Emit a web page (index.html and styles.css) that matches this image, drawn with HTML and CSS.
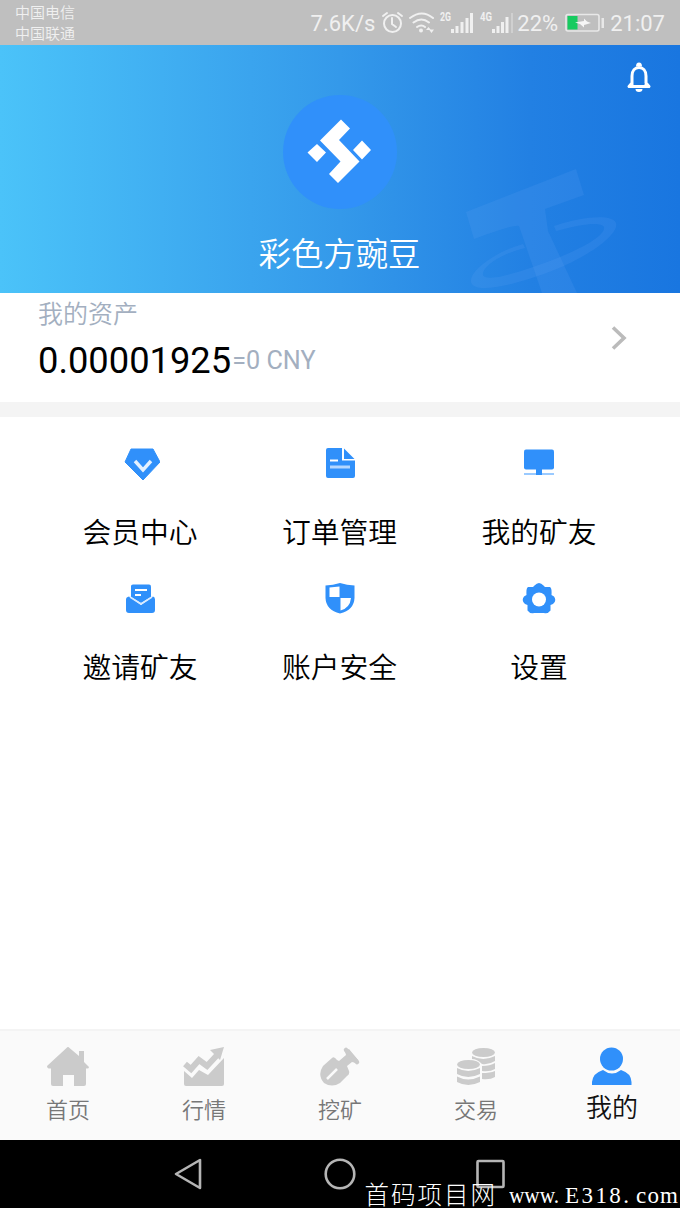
FILE: index.html
```html
<!DOCTYPE html>
<html lang="zh-CN">
<head>
  <meta charset="UTF-8" />
  <meta name="viewport" content="width=device-width, initial-scale=1.0"/>
  <title>我的</title>
  <link rel="stylesheet" href="styles.css">
</head>
<body>

  <div class="status-bar">
    <div class="carriers">
      <span>中国电信</span>
      <span>中国联通</span>
    </div>
    <div class="status-right">
      <span class="speed">7.6K/s</span>
      <svg class="status-icons" width="134" height="30" viewBox="380 8 134 30">
        <g fill="none" stroke="#f0f0f0" stroke-width="2" stroke-linecap="round">
          <circle cx="392.500" cy="23.500" r="8.500"/>
          <path d="M392 18v6l4 3M383 16l4-3M398 13l4 3"/>
          <path d="M410 18q12-9 23 0M413.500 22.500q8-6 15.500 0M417 27q4.500-3 8 0"/>
        </g>
        <circle cx="421" cy="30.500" r="2" fill="#f0f0f0"/>
        <path d="M426 30l2.500-3 2.500 3zM429 29.500h5l-2.500 3.500z" fill="#f0f0f0"/>
        <text class="net" x="440" y="21" textLength="11" lengthAdjust="spacingAndGlyphs">2G</text>
        <path d="M451 29h3v4h-3zM455.500 26h3v7h-3zM460.500 22h3v11h-3zM465.500 18h3v15h-3zM470 13h3v20h-3z" fill="#f0f0f0"/>
        <text class="net" x="480" y="21" textLength="12" lengthAdjust="spacingAndGlyphs">4G</text>
        <path d="M492 29h3v4h-3zM496.500 26h3v7h-3zM501 22h3v11h-3zM505.500 17h3v16h-3z" fill="#f0f0f0"/>
        <path d="M511 13h2v20h-2z" fill="#d0d0d0"/>
      </svg>
      <span class="percent">22%</span>
      <svg class="battery" width="40" height="20" viewBox="0 0 40 20">
        <rect x="1" y="1.500" width="33" height="16.500" rx="2" fill="none" stroke="#e8e8e8" stroke-width="1.600"/>
        <rect x="2.500" y="3" width="10" height="13.500" fill="#17cb60"/>
        <rect x="36.500" y="5" width="2.500" height="10" fill="#e8e8e8"/>
        <path d="M10 9.500L19 8V5.500L22 8.500L26 10L19 12V14.500L15 11Z" fill="#f6f6f6"/>
      </svg>
      <span class="time">21:07</span>
    </div>
  </div>

  <header class="profile">
    <svg class="coin-bg" width="160" height="125" viewBox="460 168 160 125">
      <path d="M466 212L576 169L584 195L545 209L548 231L577 293H542L519 226Q514 224 474 239Z"/>
      <path fill-rule="evenodd" d="M523 244C492 253 469 272 471 282C474 294 510 287 554 270C594 254 619 233 616 223C613 214 583 216 554 226L556 231C584 223 602 222 604 227C606 235 584 248 550 261C512 275 485 282 483 275C481 268 499 254 525 248Z"/>
    </svg>
    <div class="top-row">
      <svg class="bell" width="26" height="32" viewBox="0 0 26 32">
        <path d="M4 25.500H22M6 25V15C6 9.500 9 6.500 13 6.500S20 9.500 20 15V25M3 25.500L6 22M23 25.500L20 22" fill="none" stroke="#fff" stroke-width="3" stroke-linecap="round"/>
        <path d="M10 5.500a3 4 0 0 1 6 0zM9.500 28h7a3.500 3 0 0 1-7 0z" fill="#fff"/>
      </svg>
    </div>
    <svg class="avatar" width="114" height="114" viewBox="0 0 114 114">
      <circle cx="57" cy="57" r="57" fill="#3090fa"/>
      <path d="M58 24.500L67 33.500L56 45L76.500 66.500L55 88L46 79L57.500 66.500L37 45.500Z" fill="#fff"/>
      <path d="M34 49L43 57.500L34 67L24.500 57.500ZM79 45.500L88 55L79 64.500L70 55Z" fill="#fff"/>
    </svg>
    <h1>彩色方豌豆</h1>
  </header>

  <section class="assets">
    <div>
      <div class="assets-label">我的资产</div>
      <div class="assets-value"><b>0.00001925</b><span>=0 CNY</span></div>
    </div>
    <svg class="arrow" width="18" height="26" viewBox="0 0 18 26">
      <path d="M3 2.500L14 13L3 23.500" fill="none" stroke="#bbb" stroke-width="3.600"/>
    </svg>
  </section>

  <main class="menu">
    <a class="menu-item">
      <svg width="40" height="36" viewBox="0 0 40 36">
        <path d="M11 2H33L40 15L23 33L5 15Z" fill="#3090fa" stroke="#3090fa" stroke-linejoin="round"/>
        <path d="M15 14L23 23L31 14" fill="none" stroke="#e4f1ff" stroke-width="3.400"/>
      </svg>
      <span>会员中心</span>
    </a>
    <a class="menu-item">
      <svg width="40" height="36" viewBox="0 0 40 36">
        <path d="M8 1H22V13.500H35V29Q35 31 33 31H8Q6 31 6 29V3Q6 1 8 1Z" fill="#3090fa"/>
        <path d="M24 1.500L34.500 12H24Z" fill="#3090fa"/>
        <path d="M10 13.500H18" stroke="#fff" stroke-width="2"/>
        <path d="M10 20H30" stroke="#b4d7ff" stroke-width="3"/>
      </svg>
      <span>订单管理</span>
    </a>
    <a class="menu-item">
      <svg width="40" height="36" viewBox="0 0 40 36">
        <rect x="5" y="2.500" width="30" height="20" rx="2" fill="#3090fa"/>
        <path d="M5 27H35" stroke="#9acaff" stroke-width="2"/>
        <path d="M17 22H23V28H17Z" fill="#3090fa"/>
      </svg>
      <span>我的矿友</span>
    </a>
    <a class="menu-item">
      <svg width="40" height="36" viewBox="0 0 40 36">
        <path d="M11 4Q11 2.500 13 2.500H29Q31 2.500 31 4.500V15L21 21L11 15Z" fill="#3090fa"/>
        <path d="M15 8H27M15 13H21" stroke="#fff" stroke-width="2"/>
        <path d="M9 14.500L21 23L33 14.500Q35 15 35 17.500V28Q35 31 32 31H9Q6 31 6 28V17.500Q6 15 9 14.500Z" fill="#3090fa"/>
        <path d="M10 15L21 22L32 15" fill="none" stroke="#d9eaff" stroke-width="1.500"/>
      </svg>
      <span>邀请矿友</span>
    </a>
    <a class="menu-item">
      <svg width="40" height="36" viewBox="0 0 40 36">
        <path d="M20 1Q27 3 34.500 3.500V16Q34 28 20 31.500Q6 28 5.500 16V3.500Q13 3 20 1Z" fill="#3090fa"/>
        <path d="M9.500 5.500L19.500 4.500V15H9.500ZM20.500 16H31Q30 26 20.500 28.500Z" fill="#fff"/>
      </svg>
      <span>账户安全</span>
    </a>
    <a class="menu-item">
      <svg width="40" height="36" viewBox="0 0 40 36">
        <path d="M15.500 3.500Q20-1.500 24.500 3.500L26 5H31Q33 6 32.500 13L35 14.500Q38 19 34 22L31.500 23V28.500Q29 32 25 31L20 31L15 31Q11 32 8.500 28.500V23L6 22Q2 19 5 14.500L7.500 13Q7 6 9 5H14Z" fill="#3090fa"/>
        <circle cx="20" cy="17.500" r="7" fill="#fff"/>
      </svg>
      <span>设置</span>
    </a>
  </main>

  <nav class="tab-bar">
    <a class="tab">
      <svg width="44" height="42" viewBox="0 0 44 42">
        <path d="M20.500 2Q22 0 23.500 2L33 10V5H38V16L43 21Q43 23 40 22.500V38Q40 40 38 40H28V29H17V40H7Q5 40 5 38V22.500Q1 23 1 20Z"/>
      </svg>
      <span>首页</span>
    </a>
    <a class="tab">
      <svg width="44" height="42" viewBox="0 0 44 42">
        <path d="M2 25L10 32L17 24L26 29L42 12V38Q42 40 40 40H4Q2 40 2 38Z"/>
        <path d="M3 18L9 23L17 14L25 20L37 7" fill="none" stroke="#cbcbcb" stroke-width="6"/>
        <path d="M28 4L42 1L38 14Z"/>
      </svg>
      <span>行情</span>
    </a>
    <a class="tab">
      <svg width="44" height="42" viewBox="0 0 44 42">
        <path d="M14 12Q16 10 19 14L21 15L28 9L27 5L31 3L40 14L38 17L34 16L29 20L31 25Q32 28 29 30L22 37Q14 42 6 37Q-1 29 5 20Z"/>
        <path d="M28 4L39 16" stroke="#cbcbcb" stroke-width="4.500" stroke-linecap="round"/>
        <path d="M9 33L19 23" stroke="#fafafa" stroke-width="2.500"/>
      </svg>
      <span>挖矿</span>
    </a>
    <a class="tab">
      <svg width="44" height="42" viewBox="0 0 44 42">
        <ellipse cx="29.500" cy="6.500" rx="11.500" ry="4.500"/>
        <path d="M18 10Q29 16 41 10V15Q35 19 28 18Q23 13 18 13ZM28 20Q36 20 41 17V23Q36 26 28 25ZM28 27Q36 27 41 25V31Q36 34 28 33Z"/>
        <ellipse cx="14.500" cy="18.500" rx="11.500" ry="4.500"/>
        <path d="M3 22Q14 28 26 22V28Q14 34 3 28ZM3 30.500Q14 36.500 26 30.500V36Q14 42 3 36Z"/>
      </svg>
      <span>交易</span>
    </a>
    <a class="tab active">
      <svg width="44" height="42" viewBox="0 0 44 42">
        <circle cx="21.500" cy="13" r="11.500"/>
        <path d="M13 24Q22 31 31 24Q41 27 41.500 36V39H2V36Q3 27 13 24Z"/>
      </svg>
      <span>我的</span>
    </a>
  </nav>

  <footer class="system-nav">
    <svg width="30" height="34" viewBox="0 0 30 34"><path d="M2 17L26 3V31Z"/></svg>
    <svg width="34" height="34" viewBox="0 0 34 34"><circle cx="17" cy="17" r="14.300"/></svg>
    <svg width="30" height="34" viewBox="0 0 30 34"><rect x="1.500" y="4" width="26" height="26" rx="1"/></svg>
    <div class="site-mark">
      <span>首码项目网</span>
      <svg class="site-url" width="170" height="30" viewBox="0 0 170 30">
        <text x="0" y="24.500" textLength="50" lengthAdjust="spacingAndGlyphs">www.</text>
        <text x="56" y="24.500" textLength="64">E318.</text>
        <text x="127" y="24.500" textLength="42">com</text>
      </svg>
    </div>
  </footer>

</body>
</html>
```
FILE: styles.css
```css
* {
  box-sizing: border-box;
}
body {
  margin: 0;
  height: 1208px;
  display: flex;
  flex-direction: column;
  overflow: hidden;
  background: #fff;
  color: #111;
  font-family: Roboto, "Noto Sans CJK SC", sans-serif;
}
svg {
  display: block;
  flex-shrink: 0;
}

/* status bar */
.status-bar {
  height: 45px;
  display: flex;
  justify-content: space-between;
  padding: 0 15px;
  background: #bfbfbf;
  color: #f0f0f0;
}
.carriers {
  display: flex;
  flex-direction: column;
  padding-top: 3px;
  font-size: 15px;
  font-weight: 350;
  line-height: 20.5px;
}
.status-right {
  display: flex;
  align-items: center;
  height: 46px;
  font-size: 22px;
}
.speed {
  margin-right: 5px;
}
.status-icons {
  margin-right: 3px;
}
.net {
  font: bold 12px Roboto, sans-serif;
  fill: #f0f0f0;
}
.percent {
  margin-right: 7px;
}
.battery {
  margin-right: 5px;
}

/* profile header */
.profile {
  position: relative;
  height: 248px;
  display: flex;
  flex-direction: column;
  align-items: center;
  background: linear-gradient(to right, #4bc3f9 0%, #3499ea 50%, #2280e3 78%, #1976e0 100%);
  color: #fff;
}
.coin-bg {
  position: absolute;
  left: 460px;
  bottom: 0;
  fill: rgba(110, 170, 250, 0.14);
}
.top-row {
  width: 100%;
  height: 50px;
  display: flex;
  justify-content: flex-end;
  padding: 16px 28px 0 0;
}
.profile h1 {
  margin: 22px 0 0;
  padding-right: 1px;
  font-size: 32.4px;
  line-height: 48px;
  font-weight: 350;
}

/* assets */
.assets {
  height: 124px;
  display: flex;
  justify-content: space-between;
  padding: 3px 52px 0 38px;
  border-bottom: 15px solid #f4f4f4;
}
.assets-label {
  font-size: 25px;
  font-weight: 350;
  line-height: 37px;
  color: #a3afc0;
}
.assets-value {
  display: flex;
  align-items: center;
  height: 55px;
}
.assets-value b {
  font-size: 36.3px;
  font-weight: 400;
  color: #000;
}
.assets-value span {
  margin-left: 1px;
  font-size: 25.2px;
  color: #a3afc0;
}
.arrow {
  margin-top: 29px;
}

/* menu */
.menu {
  flex: 1;
  display: grid;
  grid-template-columns: repeat(3, 199.5px);
  grid-auto-rows: 134.5px;
  justify-content: center;
  padding: 30px 1px 0 0;
}
.menu-item {
  display: flex;
  flex-direction: column;
  align-items: center;
}
.menu-item span {
  margin-top: 30px;
  font-size: 28.8px;
  font-weight: 350;
  line-height: 40px;
  color: #000;
}

/* bottom tabs */
.tab-bar {
  height: 111px;
  display: flex;
  border-top: 2px solid #f4f4f4;
  background: #fafafa;
}
.tab {
  flex: 1;
  display: flex;
  flex-direction: column;
  align-items: center;
  padding-top: 15px;
  font-size: 22px;
  font-weight: 350;
  color: #777;
}
.tab svg {
  fill: #cbcbcb;
}
.tab span {
  margin-top: 7px;
  line-height: 32px;
}
.tab.active {
  font-size: 26px;
  color: #111;
}
.tab.active svg {
  fill: #3090fa;
}
.tab.active span {
  margin-top: 4px;
}

/* system buttons */
.system-nav {
  position: relative;
  height: 68px;
  display: flex;
  justify-content: space-between;
  padding: 17px 174px 0;
  background: #000;
}
.system-nav svg {
  fill: none;
  stroke: #b5b5b5;
  stroke-width: 2.6;
  stroke-linejoin: round;
}
.site-mark {
  position: absolute;
  right: 1px;
  bottom: 0;
  display: flex;
  align-items: flex-end;
  color: #fff;
  font-size: 24.5px;
  font-weight: 300;
  line-height: 25px;
  letter-spacing: 2px;
  white-space: nowrap;
}
.system-nav .site-url {
  margin-left: 12px;
  font-family: "Liberation Serif", serif;
  font-size: 23px;
  font-weight: 400;
  letter-spacing: 0;
  fill: #fff;
  stroke: none;
}
```
